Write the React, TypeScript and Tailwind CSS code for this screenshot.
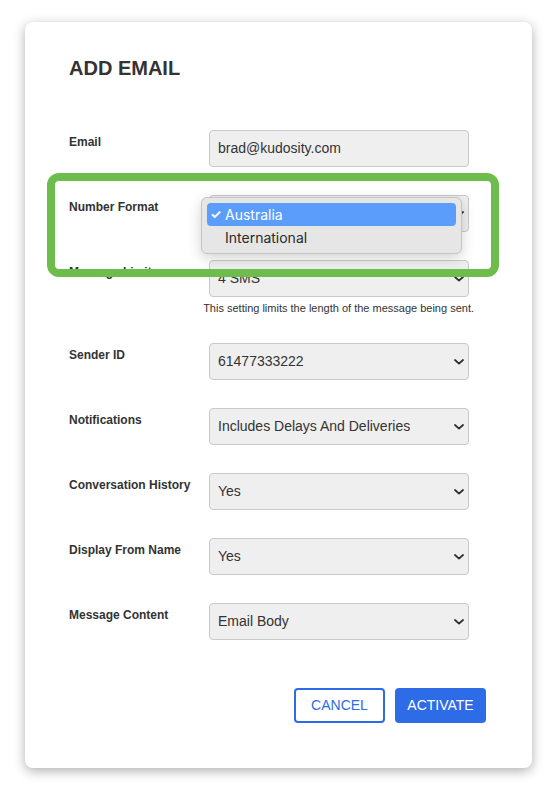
import React from "react"

const font = { fontFamily: '"Liberation Sans", Arial, sans-serif' }

function Chevron() {
    return (
        <svg width="10" height="6" viewBox="0 0 10 6" className="shrink-0">
            <path d="M1 1 L5 4.6 L9 1" fill="none" stroke="#2f2f2f" strokeWidth="1.8" strokeLinecap="round" strokeLinejoin="round" />
        </svg>
    )
}

function FieldBox({ value, select = true }: { value: string; select?: boolean }) {
    return (
        <div className="flex h-[37px] w-[260px] items-center justify-between rounded-[4px] border border-[#c9c9c9] bg-[#efefef] pl-[8px] pr-[4px] text-[14px] text-[#333]">
            <span className="truncate">{value}</span>
            {select && <Chevron />}
        </div>
    )
}

function Row({ label, value, select = true, hint }: { label: string; value: string; select?: boolean; hint?: string }) {
    return (
        <div className="flex items-start">
            <div className="w-[140px] pt-[4px] text-[12px] font-bold leading-4 text-[#333]">{label}</div>
            <div className="w-[260px]">
                <FieldBox value={value} select={select} />
                {hint && (
                    <div className="-ml-[10px] -mr-[5px] mt-[5px] whitespace-nowrap text-right text-[11px] leading-[13px] text-[#333]">{hint}</div>
                )}
            </div>
        </div>
    )
}

export default function App() {
    return (
        <div className="min-h-[803px] bg-white pl-[25px] pt-[22px]" style={font}>
            <div className="relative w-[507px] rounded-[8px] bg-white px-[44px] pb-[45px] pt-[32px] shadow-[0_3px_12px_rgba(0,0,0,0.32)]">
                <h1 className="text-[20px] font-bold leading-7 text-[#333]">ADD EMAIL</h1>

                <div className="mt-[48px] flex flex-col gap-[28px]">
                    <Row label="Email" value="brad@kudosity.com" select={false} />
                    {/* value hidden under the open menu */}
                    <Row label="Number Format" value="" />
                    <Row label="Message Limit" value="4 SMS" hint="This setting limits the length of the message being sent." />
                    <Row label="Sender ID" value="61477333222" />
                    <Row label="Notifications" value="Includes Delays And Deliveries" />
                    <Row label="Conversation History" value="Yes" />
                    <Row label="Display From Name" value="Yes" />
                    <Row label="Message Content" value="Email Body" />
                </div>

                <div className="mr-[2px] mt-[48px] flex justify-end gap-[10px]">
                    <button className="h-[35px] w-[91px] rounded-[4px] border-2 border-[#2e6be6] bg-white text-[14px] text-[#2e6be6]">
                        CANCEL
                    </button>
                    <button className="h-[35px] w-[91px] rounded-[4px] bg-[#2e6be6] text-[14px] text-white">
                        ACTIVATE
                    </button>
                </div>

                {/* open dropdown for Number Format */}
                <div
                    className="absolute left-[176px] top-[175px] h-[57px] w-[261px] rounded-[6px] border border-[#c4c4c4] bg-[#e6e6e6] px-[5px] pt-[5px] shadow-[0_4px_14px_rgba(0,0,0,0.18)]"
                    style={{ fontFamily: 'Inter, "Noto Sans", sans-serif' }}
                >
                    <div className="flex h-[23px] items-center rounded-[4px] bg-[#5a9dfb] text-[14px] text-white">
                        <span className="w-[18px] pl-[3px] text-[13px] font-bold">✓</span>
                        <span>Australia</span>
                    </div>
                    <div className="flex h-[23px] items-center text-[14px] text-[#2a2a2a]">
                        <span className="w-[18px]" />
                        <span>International</span>
                    </div>
                </div>

                {/* highlight frame */}
                <div className="pointer-events-none absolute left-[22px] top-[151px] h-[104px] w-[452px] rounded-[12px] border-[8px] border-[#6cbd4b]" />
            </div>
        </div>
    )
}
